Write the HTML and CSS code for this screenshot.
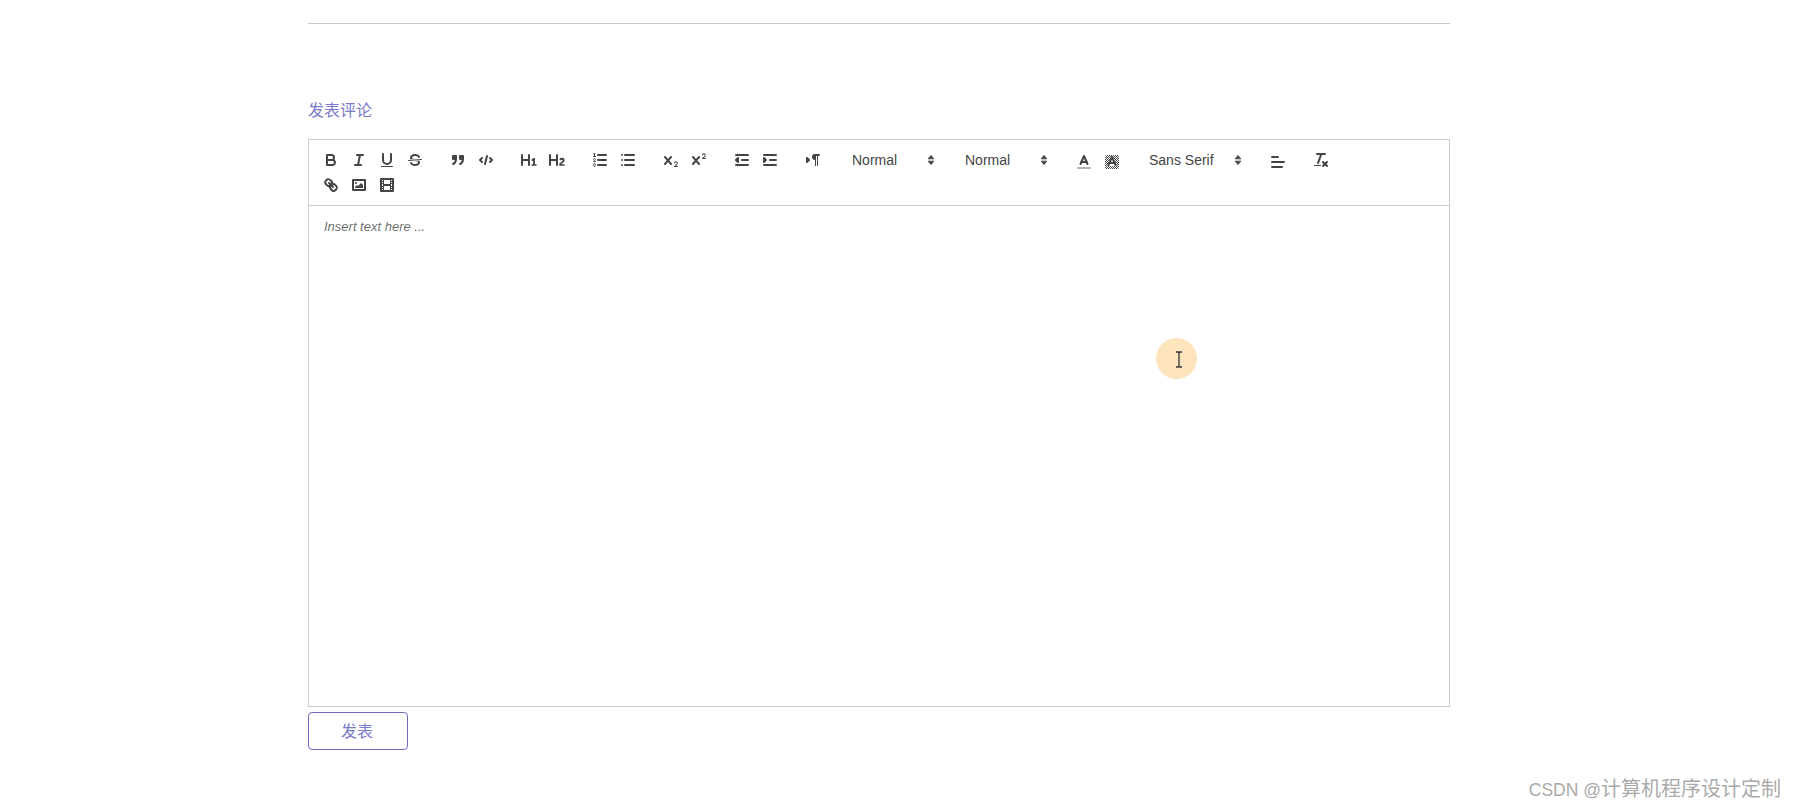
FILE: index.html
```html
<!DOCTYPE html>
<html lang="zh">
<head>
<meta charset="utf-8">
<title>发表评论</title>
<link rel="stylesheet" href="styles.css">
</head>
<body>
<main class="page">
  <hr class="rule">
  <h2 class="title">发表评论</h2>
  <section class="editor">
    <div class="toolbar">
      <div class="row">
        <div class="group">
          <button class="btn"><svg viewBox="0 0 18 18"><path class="s" d="M5,4H9.5A2.5,2.5,0,0,1,12,6.5v0A2.5,2.5,0,0,1,9.5,9H5A0,0,0,0,1,5,9V4A0,0,0,0,1,5,4Z"/><path class="s" d="M5,9h5.5A2.5,2.5,0,0,1,13,11.5v0A2.5,2.5,0,0,1,10.5,14H5a0,0,0,0,1,0,0V9A0,0,0,0,1,5,9Z"/></svg></button>
          <button class="btn"><svg viewBox="0 0 18 18"><line class="s" x1="7" x2="13" y1="4" y2="4"/><line class="s" x1="5" x2="11" y1="14" y2="14"/><line class="s" x1="8" x2="10" y1="14" y2="4"/></svg></button>
          <button class="btn"><svg viewBox="0 0 18 18"><path class="s" d="M5,3V9a4.012,4.012,0,0,0,4,4H9a4.012,4.012,0,0,0,4-4V3"/><rect class="f" height="1" rx="0.5" ry="0.5" width="12" x="3" y="15"/></svg></button>
          <button class="btn"><svg viewBox="0 0 18 18"><line class="s t" x1="15.5" x2="2.5" y1="8.5" y2="9.5"/><path class="f" d="M9.007,8C6.542,7.791,6,7.519,6,6.5,6,5.792,7.283,5,9,5c1.571,0,2.765.679,2.969,1.309a1,1,0,0,0,1.9-.617C13.356,4.106,11.354,3,9,3,6.2,3,4,4.538,4,6.5a3.2,3.2,0,0,0,.5,1.843Z"/><path class="f" d="M8.984,10C11.457,10.208,12,10.479,12,11.5c0,.708-1.283,1.5-3,1.5-1.571,0-2.765-.679-2.969-1.309a1,1,0,1,0-1.9.617C4.644,13.894,6.646,15,9,15c2.8,0,5-1.538,5-3.5a3.2,3.2,0,0,0-.5-1.843Z"/></svg></button>
        </div>
        <div class="group">
          <button class="btn"><svg viewBox="0 0 18 18"><rect class="f s" height="3" width="3" x="4" y="5"/><rect class="f s" height="3" width="3" x="11" y="5"/><path class="f s" d="M7,8c0,4.031-3,5-3,5"/><path class="f s" d="M14,8c0,4.031-3,5-3,5"/></svg></button>
          <button class="btn"><svg viewBox="0 0 18 18"><polyline class="s" points="5 7 3 9 5 11"/><polyline class="s" points="13 7 15 9 13 11"/><line class="s" x1="10" x2="8" y1="5" y2="13"/></svg></button>
        </div>
        <div class="group">
          <button class="btn"><svg viewBox="0 0 18 18"><path class="f" d="M10,4V14a1,1,0,0,1-2,0V10H3v4a1,1,0,0,1-2,0V4A1,1,0,0,1,3,4V8H8V4a1,1,0,0,1,2,0Zm6.06787,9.209H14.98975V7.59229a.54085.54085,0,0,0-.605-.60547h-.62744a1.01119,1.01119,0,0,0-.748.29688L11.645,8.56641a.5435.5435,0,0,0-.022.8584l.28613.30762a.53861.53861,0,0,0,.84717.0332l.09912-.08789a1.2137,1.2137,0,0,0,.2417-.35254h.02246s-.01123.30859-.01123.60547V13.209H12.041a.54085.54085,0,0,0-.605.60547v.43945a.54085.54085,0,0,0,.605.60547h4.02686a.54085.54085,0,0,0,.605-.60547v-.43945A.54085.54085,0,0,0,16.06787,13.209Z"/></svg></button>
          <button class="btn"><svg viewBox="0 0 18 18"><path class="f" d="M16.73975,13.81445v.43945a.54085.54085,0,0,1-.605.60547H11.855a.58392.58392,0,0,1-.64893-.60547V14.0127c0-2.90527,3.39941-3.42187,3.39941-4.55469a.77675.77675,0,0,0-.84717-.78125,1.17684,1.17684,0,0,0-.83594.38477c-.2749.26367-.561.374-.85791.13184l-.4292-.34082c-.30811-.24219-.38525-.51758-.1543-.81445a2.97155,2.97155,0,0,1,2.45361-1.17676,2.45393,2.45393,0,0,1,2.68408,2.40918c0,2.45312-3.1792,2.92676-3.27832,3.93848h2.79443A.54085.54085,0,0,1,16.73975,13.81445ZM9,3A.99974.99974,0,0,0,8,4V8H3V4A1,1,0,0,0,1,4V14a1,1,0,0,0,2,0V10H8v4a1,1,0,0,0,2,0V4A.99974.99974,0,0,0,9,3Z"/></svg></button>
        </div>
        <div class="group">
          <button class="btn"><svg viewBox="0 0 18 18"><line class="s" x1="7" x2="15" y1="4" y2="4"/><line class="s" x1="7" x2="15" y1="9" y2="9"/><line class="s" x1="7" x2="15" y1="14" y2="14"/><line class="s t" x1="2.5" x2="4.5" y1="5.5" y2="5.5"/><path class="f" d="M3.5,6A0.5,0.5,0,0,1,3,5.5V3.085l-0.276.138A0.5,0.5,0,0,1,2.053,3c-0.124-.247-0.023-0.324.224-0.447l1-.5A0.5,0.5,0,0,1,4,2.5v3A0.5,0.5,0,0,1,3.5,6Z"/><path class="s t" d="M4.5,10.5h-2c0-.234,1.85-1.076,1.85-2.234A0.959,0.959,0,0,0,2.5,8.156"/><path class="s t" d="M2.5,14.846a0.959,0.959,0,0,0,1.85-.109A0.7,0.7,0,0,0,3.75,14a0.688,0.688,0,0,0,.6-0.736,0.959,0.959,0,0,0-1.85-.109"/></svg></button>
          <button class="btn"><svg viewBox="0 0 18 18"><line class="s" x1="6" x2="15" y1="4" y2="4"/><line class="s" x1="6" x2="15" y1="9" y2="9"/><line class="s" x1="6" x2="15" y1="14" y2="14"/><line class="s" x1="3" x2="3" y1="4" y2="4"/><line class="s" x1="3" x2="3" y1="9" y2="9"/><line class="s" x1="3" x2="3" y1="14" y2="14"/></svg></button>
        </div>
        <div class="group">
          <button class="btn"><svg viewBox="0 0 18 18"><path class="f" d="M15.5,15H13.861a3.858,3.858,0,0,0,1.914-2.975,1.8,1.8,0,0,0-1.6-1.751A1.921,1.921,0,0,0,12.021,11.7a0.50013,0.50013,0,1,0,.957.291h0a0.914,0.914,0,0,1,1.053-.725,0.81,0.81,0,0,1,.744.762c0,1.076-1.16971,1.86982-1.93971,2.43082A1.45639,1.45639,0,0,0,12,15.5a0.5,0.5,0,0,0,.5.5h3A0.5,0.5,0,0,0,15.5,15Z"/><path class="f" d="M9.65,5.241a1,1,0,0,0-1.409.108L6,7.964,3.759,5.349A1,1,0,0,0,2.192,6.59178Q2.2,6.6,2.241,6.651L4.684,9.5,2.241,12.35A1,1,0,0,0,3.71,13.70722q0.02557-.02768.049-0.05722L6,11.036,8.241,13.65a1,1,0,1,0,1.567-1.24277Q9.8,12.4,9.759,12.35L7.316,9.5,9.759,6.651A1,1,0,0,0,9.65,5.241Z"/></svg></button>
          <button class="btn"><svg viewBox="0 0 18 18"><path class="f" d="M15.5,7H13.861a4.015,4.015,0,0,0,1.914-2.975,1.8,1.8,0,0,0-1.6-1.751A1.922,1.922,0,0,0,12.021,3.7a0.5,0.5,0,1,0,.957.291,0.917,0.917,0,0,1,1.053-.725,0.81,0.81,0,0,1,.744.762c0,1.077-1.164,1.925-1.934,2.486A1.423,1.423,0,0,0,12,7.5a0.5,0.5,0,0,0,.5.5h3A0.5,0.5,0,0,0,15.5,7Z"/><path class="f" d="M9.651,5.241a1,1,0,0,0-1.41.108L6,7.964,3.759,5.349a1,1,0,1,0-1.519,1.3L4.683,9.5,2.241,12.35a1,1,0,1,0,1.519,1.3L6,11.036,8.241,13.65a1,1,0,0,0,1.519-1.3L7.317,9.5,9.759,6.651A1,1,0,0,0,9.651,5.241Z"/></svg></button>
        </div>
        <div class="group">
          <button class="btn"><svg viewBox="0 0 18 18"><line class="s" x1="3" x2="15" y1="14" y2="14"/><line class="s" x1="3" x2="15" y1="4" y2="4"/><line class="s" x1="9" x2="15" y1="9" y2="9"/><polyline class="f s" points="5 7 5 11 3 9 5 7"/></svg></button>
          <button class="btn"><svg viewBox="0 0 18 18"><line class="s" x1="3" x2="15" y1="14" y2="14"/><line class="s" x1="3" x2="15" y1="4" y2="4"/><line class="s" x1="9" x2="15" y1="9" y2="9"/><polyline class="f s" points="3 7 3 11 5 9 3 7"/></svg></button>
        </div>
        <div class="group wide">
          <button class="btn"><svg viewBox="0 0 18 18"><polygon class="f s" points="3 11 5 9 3 7 3 11"/><line class="s" x1="15" x2="11" y1="4" y2="4"/><path class="f" d="M11,3a3,3,0,0,0,0,6h1V3H11Z"/><rect class="f" height="11" width="1" x="11" y="4"/><rect class="f" height="11" width="1" x="13" y="4"/></svg></button>
        </div>
        <div class="group">
          <span class="picker header">Normal<svg viewBox="0 0 18 18"><polygon class="s t2" points="6.5 10.5 9 13.5 11.5 10.5"/><polygon class="s t2" points="6.5 7.5 9 4.5 11.5 7.5"/></svg></span>
        </div>
        <div class="group">
          <span class="picker header">Normal<svg viewBox="0 0 18 18"><polygon class="s t2" points="6.5 10.5 9 13.5 11.5 10.5"/><polygon class="s t2" points="6.5 7.5 9 4.5 11.5 7.5"/></svg></span>
        </div>
        <div class="group">
          <button class="btn low"><svg viewBox="0 0 18 18"><line class="s faint" x1="3" x2="15" y1="15" y2="15"/><polyline class="s" points="5.5 11 9 3 12.5 11"/><line class="s" x1="11.63" x2="6.38" y1="9" y2="9"/></svg></button>
          <button class="btn low"><svg viewBox="0 0 18 18"><defs><pattern id="hatch" width="2" height="2" patternUnits="userSpaceOnUse"><rect width="1" height="1" fill="#444"/><rect x="1" y="1" width="1" height="1" fill="#444"/></pattern></defs><polygon fill="url(#hatch)" points="2 3 3 2 15 2 16 3 16 15 15 16 3 16 2 15"/><polygon class="knock" points="4.5 13 8 4 10 4 13.5 13"/><polyline class="s" points="5.5 12 9 4 12.5 12"/><line class="s" x1="11.63" x2="6.38" y1="10" y2="10"/></svg></button>
        </div>
        <div class="group">
          <span class="picker font">Sans Serif<svg viewBox="0 0 18 18"><polygon class="s t2" points="6.5 10.5 9 13.5 11.5 10.5"/><polygon class="s t2" points="6.5 7.5 9 4.5 11.5 7.5"/></svg></span>
        </div>
        <div class="group">
          <button class="btn low"><svg viewBox="0 0 18 18"><line class="s" x1="3" x2="15" y1="9" y2="9"/><line class="s" x1="3" x2="13" y1="14" y2="14"/><line class="s" x1="3" x2="9" y1="4" y2="4"/></svg></button>
        </div>
        <div class="group">
          <button class="btn"><svg viewBox="0 0 18 18"><line class="s" x1="5" x2="13" y1="3" y2="3"/><line class="s" x1="6" x2="9.35" y1="12" y2="3"/><line class="s" x1="11" x2="15" y1="11" y2="15"/><line class="s" x1="15" x2="11" y1="11" y2="15"/><rect class="f" height="1" rx="0.5" ry="0.5" width="7" x="2" y="14"/></svg></button>
        </div>
      </div>
      <div class="row">
        <div class="group">
          <button class="btn"><svg viewBox="0 0 18 18"><line class="s" x1="7" x2="11" y1="7" y2="11"/><path class="s" d="M8.9,4.577a3.476,3.476,0,0,1,.36,4.679A3.476,3.476,0,0,1,4.577,8.9C3.185,7.5,2.035,6.4,4.217,4.217S7.5,3.185,8.9,4.577Z"/><path class="s" d="M13.423,9.1a3.476,3.476,0,0,0-4.679-.36,3.476,3.476,0,0,0,.36,4.679c1.392,1.392,2.5,2.542,4.679.36S14.815,10.5,13.423,9.1Z"/></svg></button>
          <button class="btn"><svg viewBox="0 0 18 18"><rect class="s" height="10" width="12" x="3" y="4"/><circle class="f" cx="6" cy="7" r="1"/><polyline class="f" points="5 12 5 11 7 9 8 10 11 7 13 9 13 12 5 12"/></svg></button>
          <button class="btn"><svg viewBox="0 0 18 18"><rect class="s" height="12" width="12" x="3" y="3"/><rect class="f" height="12" width="1" x="5" y="3"/><rect class="f" height="12" width="1" x="12" y="3"/><rect class="f" height="2" width="8" x="5" y="8"/><rect class="f" height="1" width="3" x="3" y="5"/><rect class="f" height="1" width="3" x="3" y="7"/><rect class="f" height="1" width="3" x="3" y="10"/><rect class="f" height="1" width="3" x="3" y="12"/><rect class="f" height="1" width="3" x="12" y="5"/><rect class="f" height="1" width="3" x="12" y="7"/><rect class="f" height="1" width="3" x="12" y="10"/><rect class="f" height="1" width="3" x="12" y="12"/></svg></button>
        </div>
      </div>
    </div>
    <div class="content"><p class="placeholder">Insert text here ...</p></div>
  </section>
  <button class="submit">发表</button>
</main>
<div class="cursor">
  <svg viewBox="0 0 12 20" width="12" height="20"><path class="beam" d="M3 2.5h2.2L6 3.3l.8-.8H9M6 3.3v13.4M3 17.5h2.2l.8-.8.8.8H9"/></svg>
</div>
<div class="watermark"><span class="latin">CSDN @</span>计算机程序设计定制</div>
</body>
</html>
```

FILE: styles.css
```css
html, body {
  margin: 0;
  padding: 0;
  background: #fff;
}
body {
  font-family: "Liberation Sans", "Noto Sans CJK SC", sans-serif;
  overflow: hidden;
  height: 808px;
}
.page {
  width: 1142px;
  margin-left: 308px;
  padding-top: 23px;
}
.rule {
  margin: 0;
  border: 0;
  height: 1px;
  background: #c8c8c8;
}
.title {
  margin: 75px 0 16px;
  height: 24px;
  line-height: 24px;
  font-size: 16px;
  font-weight: 400;
  color: #7a7ac8;
}
.editor {
  border: 1px solid #ccc;
}
.toolbar {
  display: flex;
  flex-direction: column;
  gap: 1px;
  padding: 8px;
  border-bottom: 1px solid #ccc;
  height: 49px;
}
.row {
  display: flex;
  height: 24px;
}
.group {
  display: flex;
  margin-right: 15px;
}
.group.wide {
  margin-right: 17px;
}
.btn {
  display: block;
  width: 28px;
  height: 24px;
  padding: 3px 5px;
  border: 0;
  background: none;
}
.btn svg {
  display: block;
  width: 18px;
  height: 18px;
}
.btn.low svg {
  transform: translateY(2px);
}
.s {
  fill: none;
  stroke: #444;
  stroke-width: 2;
  stroke-linecap: round;
  stroke-linejoin: round;
}
.f {
  fill: #444;
}
.f.s {
  fill: #444;
  stroke: #444;
}
.t {
  stroke-width: 1;
}
.t2 {
  stroke-width: 1;
  fill: #444;
}
.faint {
  opacity: 0.4;
}
.knock {
  fill: #fff;
}
.picker {
  display: flex;
  align-items: center;
  justify-content: space-between;
  height: 24px;
  padding-left: 8px;
  padding-right: 2px;
  box-sizing: border-box;
  font-size: 14px;
  font-weight: 500;
  color: #444;
}
.picker svg {
  width: 18px;
  height: 18px;
}
.picker.header {
  width: 98px;
}
.picker.font {
  width: 108px;
}
.content {
  height: 500px;
  padding: 12px 15px;
  box-sizing: border-box;
}
.placeholder {
  margin: 0;
  font-size: 13px;
  line-height: 1.42;
  font-style: italic;
  color: rgba(0, 0, 0, 0.6);
}
.submit {
  display: block;
  width: 100px;
  height: 38px;
  margin-top: 5px;
  padding: 0 2px 3px 0;
  border: 1px solid #6c6cbc;
  border-radius: 4px;
  background: #fff;
  color: #7a7ac8;
  font-family: inherit;
  font-size: 16px;
}
.cursor {
  position: absolute;
  left: 1156px;
  top: 338px;
  width: 41px;
  height: 41px;
  border-radius: 50%;
  background: #fde4bd;
  display: flex;
  align-items: center;
  justify-content: center;
}
.cursor svg {
  transform: translate(2px, 0.5px);
}
.beam {
  fill: none;
  stroke: #333;
  stroke-width: 1.3;
}
.watermark {
  position: absolute;
  right: 14px;
  bottom: 4px;
  font-size: 20px;
  line-height: 28px;
  color: #aaa;
  white-space: nowrap;
}
.latin {
  font-size: 17.5px;
}
```
